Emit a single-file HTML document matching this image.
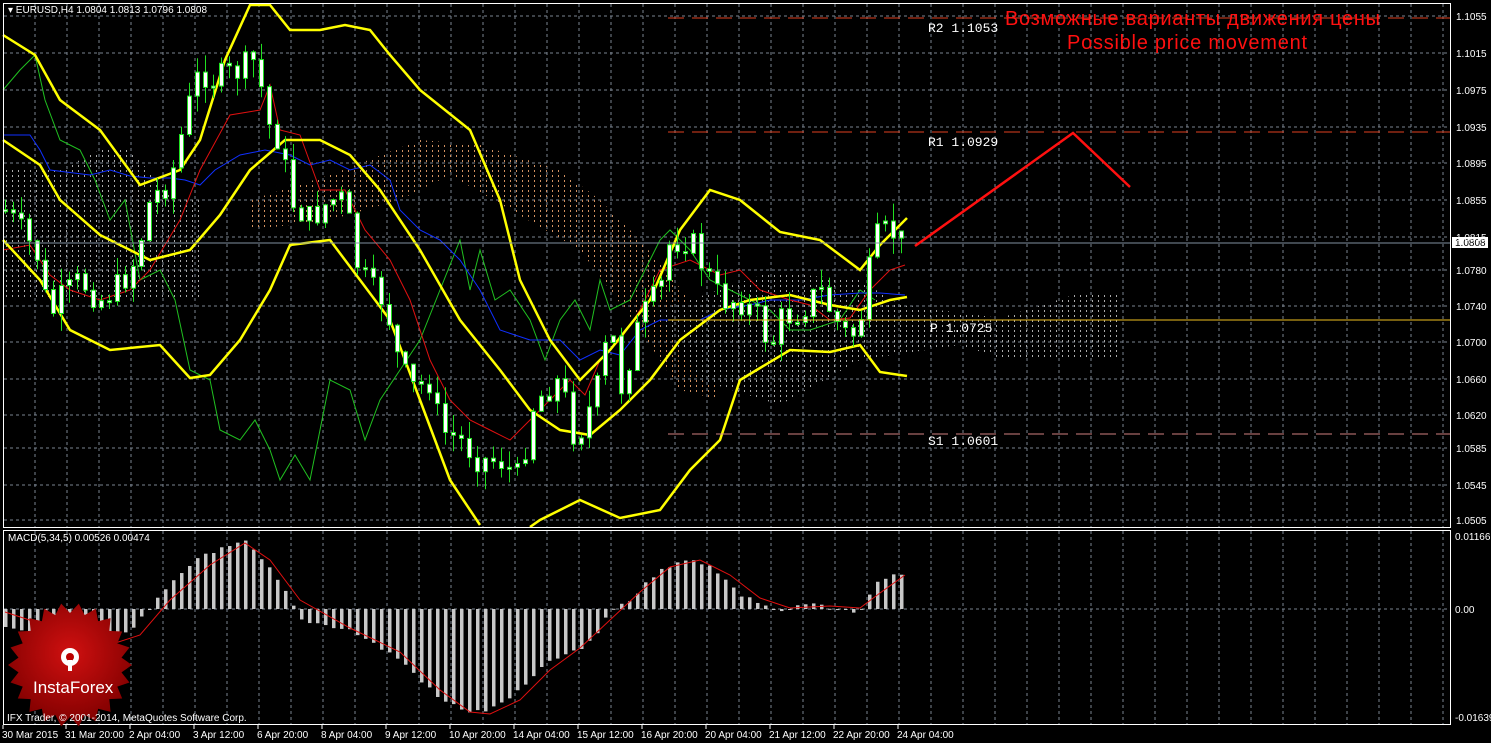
<!DOCTYPE html>
<html><head><meta charset="utf-8"><style>
html,body{margin:0;padding:0;background:#000;width:1491px;height:743px;overflow:hidden}
svg{display:block}
text{font-family:"Liberation Sans",sans-serif}
</style></head><body>
<svg id="s" width="1491" height="743" xmlns="http://www.w3.org/2000/svg">
<defs>
<pattern id="pw" width="6" height="5" patternUnits="userSpaceOnUse"><rect x="0" y="0" width="1" height="2" fill="#aaa"/></pattern>
<pattern id="po" width="6" height="5" patternUnits="userSpaceOnUse"><rect x="0" y="0" width="1" height="2" fill="#d09060"/></pattern>
<radialGradient id="rg" cx="50%" cy="40%" r="60%"><stop offset="0" stop-color="#d01010"/><stop offset="1" stop-color="#800000"/></radialGradient>
</defs>
<g id="grid"></g>
<g id="cloud"></g>
<g id="lines"></g>
<g id="candles"></g>
<g id="macd"></g>
<line x1="668" y1="18" x2="1450" y2="18" stroke="#e04020" stroke-dasharray="16,8"/>
<line x1="668" y1="132" x2="1450" y2="132" stroke="#e04020" stroke-dasharray="16,8"/>
<line x1="668" y1="434" x2="1450" y2="434" stroke="#d08080" stroke-dasharray="16,8"/>
<line x1="668" y1="320" x2="1450" y2="320" stroke="#f0c020"/>
<line x1="3" y1="243" x2="1450" y2="243" stroke="#8090a0"/>
<g font-size="13" fill="#fff">
<text x="928" y="32" style="font-family:'Liberation Mono',monospace">R2 1.1053</text>
<text x="928" y="146" style="font-family:'Liberation Mono',monospace">R1 1.0929</text>
<text x="930" y="332" style="font-family:'Liberation Mono',monospace">P 1.0725</text>
<text x="928" y="445" style="font-family:'Liberation Mono',monospace">S1 1.0601</text>
</g>
<polyline points="915,246 1073,133 1130,187" fill="none" stroke="#ff1010" stroke-width="2.5"/>
<text x="1005" y="25" fill="#ff1010" font-size="20" textLength="375">Возможные варианты движения цены</text>
<text x="1067" y="49" fill="#ff1010" font-size="20" textLength="240">Possible price movement</text>
<rect x="3.5" y="3.5" width="1447" height="524" fill="none" stroke="#fff"/>
<rect x="3.5" y="530.5" width="1447" height="194" fill="none" stroke="#fff"/>
<rect x="1452" y="237" width="36" height="11" fill="#fff"/>
<text x="1455" y="246" font-size="10" fill="#000">1.0808</text>
<g id="axis" font-size="10" fill="#fff"></g>
<text x="8" y="13" font-size="10" fill="#fff">▾ EURUSD,H4  1.0804 1.0813 1.0796 1.0808</text>
<text x="8" y="541" font-size="10" fill="#fff">MACD(5,34,5) 0.00526 0.00474</text>
<polygon id="star" fill="url(#rg)"/>
<g fill="#fff"><circle cx="70" cy="657" r="9"/><circle cx="70" cy="657" r="4" fill="#b00"/><rect x="68" y="660" width="4" height="11"/></g>
<text x="33" y="693" font-size="17" fill="#fff">InstaForex</text>
<text x="7" y="721" font-size="10" fill="#fff">IFX Trader, © 2001-2014, MetaQuotes Software Corp.</text>
</svg>
<script>
var NS="http://www.w3.org/2000/svg";
function el(p,t,a){var e=document.createElementNS(NS,t);for(var k in a)e.setAttribute(k,a[k]);document.getElementById(p).appendChild(e);return e;}
function pts(a){var s=[];for(var i=0;i<a.length;i+=2)s.push(a[i]+','+a[i+1]);return s.join(' ');}
function interp(a,x){for(var i=0;i<a.length-2;i+=2){if(x<=a[i+2]){var t=(x-a[i])/(a[i+2]-a[i]);return a[i+1]+t*(a[i+3]-a[i+1]);}}return a[a.length-1];}
for(var x=35;x<1450;x+=32)el('grid','line',{x1:x,y1:4,x2:x,y2:527,stroke:'#7a8490','stroke-dasharray':'3,3'});
for(var x=35;x<1450;x+=32)el('grid','line',{x1:x,y1:531,x2:x,y2:724,stroke:'#7a8490','stroke-dasharray':'3,3'});
var lv=[[1.1055,16],[1.1015,53],[1.0975,90],[1.0935,127],[1.0895,163],[1.0855,200],[1.0815,237],[1.0780,270],[1.0740,306],[1.0700,342],[1.0660,379],[1.0620,415],[1.0585,448],[1.0545,485],[1.0505,520]];
lv.forEach(function(l){el('grid','line',{x1:4,y1:l[1],x2:1450,y2:l[1],stroke:'#7a8490','stroke-dasharray':'3,3'});var t=el('axis','text',{x:1456,y:l[1]+4});t.textContent=l[0].toFixed(4);});
el('grid','line',{x1:4,y1:609,x2:1450,y2:609,stroke:'#7a8490','stroke-dasharray':'3,3'});
[['0.01166',540],['0.00',613],['-0.01639',721]].forEach(function(l){var t=el('axis','text',{x:1455,y:l[1]});t.textContent=l[0];});
var dl=['30 Mar 2015','31 Mar 20:00','2 Apr 04:00','3 Apr 12:00','6 Apr 20:00','8 Apr 04:00','9 Apr 12:00','10 Apr 20:00','14 Apr 04:00','15 Apr 12:00','16 Apr 20:00','20 Apr 04:00','21 Apr 12:00','22 Apr 20:00','24 Apr 04:00'];
dl.forEach(function(d,i){var x=i?67+64*(i-1)-2:2;var t=el('axis','text',{x:x,y:738});t.textContent=d;el('axis','line',{x1:x+1,y1:725,x2:x+1,y2:729,stroke:'#fff'});});
function poly(top,bot){var a=[];for(var i=0;i<top.length;i+=2)a.push(top[i]+','+top[i+1]);for(var i=bot.length-2;i>=0;i-=2)a.push(bot[i]+','+bot[i+1]);return a.join(' ');}
el('cloud','polygon',{points:poly([4,170,60,170,100,150,130,150,175,200,200,200],[4,300,200,300]),fill:'url(#pw)'});
el('cloud','polygon',{points:poly([250,200,330,175,420,140,480,145,560,170,600,200,640,240,690,300],[250,230,330,220,400,200,450,175,580,250,640,330,680,390,720,400]),fill:'url(#po)'});
el('cloud','polygon',{points:poly([660,310,690,300,770,272,860,280,900,305,1000,318,1080,293,1118,293],[660,320,700,380,780,405,860,360,960,345,1000,358,1118,360]),fill:'url(#pw)'});
var up=[3,35,35,55,60,100,100,130,140,185,180,170,200,140,225,60,250,5,270,5,290,30,320,30,345,25,370,30,390,55,420,90,470,130,500,200,520,280,550,340,580,380,610,350,650,300,680,230,710,190,740,200,780,232,820,240,860,270,880,245,907,218];
var md=[3,140,40,165,60,200,100,235,150,260,190,250,220,215,250,170,285,140,320,140,350,155,380,190,420,250,460,320,500,370,530,410,560,430,590,435,620,410,650,380,680,340,720,310,750,300,790,295,830,305,860,310,890,300,907,297];
var lo=[3,240,40,280,70,330,110,350,160,345,190,378,210,375,240,340,270,290,290,245,330,240,360,280,390,320,420,400,450,480,480,525];
var lo2=[530,527,540,520,580,500,620,518,660,510,690,470,720,440,740,380,760,368,790,350,830,352,860,345,880,372,907,376];
var gr=[3,90,20,70,35,55,45,100,60,140,80,150,95,180,110,220,125,200,140,280,160,270,175,300,190,370,210,380,220,430,240,440,255,420,270,450,280,480,295,455,310,480,330,380,350,390,365,440,380,400,400,370,420,340,440,290,460,240,470,290,480,250,495,300,510,290,530,320,545,360,560,320,575,300,590,330,600,280,610,310,630,300,645,270,660,240,670,230,690,250,710,280,730,290,750,300,770,310,790,330,810,330,840,320,860,290,875,300];
var rd=[3,250,30,245,50,275,70,290,100,300,130,290,150,270,180,220,200,170,230,115,260,110,270,85,280,130,300,135,320,190,345,190,365,230,390,260,410,300,430,360,450,400,470,420,490,430,510,440,530,420,550,400,570,380,585,395,600,360,620,340,640,310,660,270,690,260,720,275,740,270,760,290,790,300,810,305,830,320,850,318,870,290,890,270,905,265];
var bl=[3,135,30,135,40,150,50,170,90,175,110,170,130,176,150,178,170,178,185,180,200,185,215,170,240,155,265,150,290,155,310,165,330,160,350,170,370,165,390,180,400,210,420,230,440,240,460,260,480,290,500,330,530,340,560,340,580,360,600,350,620,355,640,330,660,320,700,320,720,310,750,305,770,300,800,300,830,295,860,293,880,293,905,295];
el('lines','polyline',{points:pts(gr),fill:'none',stroke:'#20c020','stroke-width':1});
el('lines','polyline',{points:pts(bl),fill:'none',stroke:'#1030ff','stroke-width':1});
el('lines','polyline',{points:pts(rd),fill:'none',stroke:'#e01010','stroke-width':1});
[up,md,lo,lo2].forEach(function(a){el('lines','polyline',{points:pts(a),fill:'none',stroke:'#ffff00','stroke-width':2.5});});
var pr=[5,210,20,230,40,260,48,320,60,300,80,280,100,300,120,285,135,260,150,200,170,180,190,100,200,70,215,80,240,70,255,60,270,130,280,140,290,200,310,220,330,200,345,200,355,260,370,290,385,300,400,370,415,390,430,380,440,430,460,440,480,460,500,460,520,480,530,410,545,390,560,380,575,440,585,420,600,380,610,320,620,390,640,320,660,290,670,240,690,240,710,280,720,300,740,300,760,320,770,350,780,320,800,310,820,290,835,320,850,340,860,320,875,240,890,230,905,245];
var prev=210,seed=7;function rnd(){seed=(seed*9301+49297)%233280;return seed/233280;}
for(var x=5;x<=905;x+=8){var c=interp(pr,x)+(rnd()-0.5)*30;var o=prev;var t=Math.min(o,c),b=Math.max(o,c);if(b-t<2)b=t+2;
var h=t-rnd()*18,l=b+rnd()*18;
el('candles','line',{x1:x+0.5,y1:h,x2:x+0.5,y2:l,stroke:'#20e020'});
el('candles','rect',{x:x-1.5,y:t,width:4,height:b-t,fill:'#fff',stroke:'#20e020','stroke-width':1});prev=c;}
var mh=[5,625,60,640,100,640,130,630,150,609,160,595,200,555,245,542,270,570,290,600,300,620,350,630,400,660,440,700,470,712,490,710,520,690,550,660,580,650,600,630,610,609,630,600,660,568,690,560,710,565,740,595,760,603,780,612,810,603,840,612,860,610,880,578,905,573];
for(var x=5;x<=905;x+=8){var v=interp(mh,x)+(rnd()-0.5)*4;var y1=Math.min(v,609),y2=Math.max(v,609);el('macd','rect',{x:x-1,y:y1,width:3.5,height:Math.max(1,y2-y1),fill:'#c8c8c8'});}
var sg=[5,612,60,630,100,648,140,635,170,600,210,565,245,543,270,560,300,600,350,628,400,652,440,690,470,712,490,714,520,700,550,670,580,648,610,620,640,592,670,567,700,560,730,575,760,598,790,608,830,606,860,608,880,593,905,575];
el('macd','polyline',{points:pts(sg),fill:'none',stroke:'#e01010','stroke-width':1});
var sp=[],cx=70,cy=665,n=22;for(var i=0;i<2*n;i++){var r=i%2?52:62,a=Math.PI*i/n;sp.push((cx+r*Math.cos(a)).toFixed(1)+','+(cy+r*Math.sin(a)).toFixed(1));}
document.getElementById('star').setAttribute('points',sp.join(' '));
</script>
</body></html>
